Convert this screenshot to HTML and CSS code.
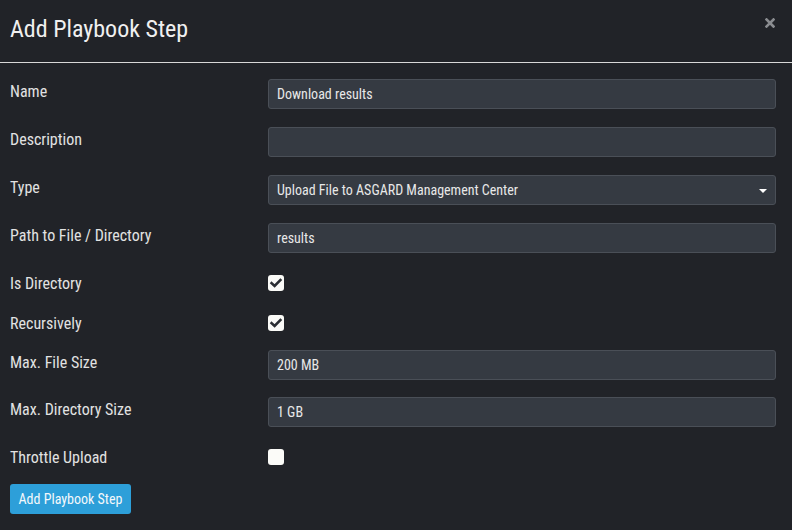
FILE: index.html
```html
<!DOCTYPE html>
<html>
<head>
<meta charset="utf-8">
<link rel="stylesheet" href="styles.css">
</head>
<body>
<div class="modal">
  <div class="modal-header">
    <h1 class="title">Add Playbook Step</h1>
    <span class="close"><svg viewBox="0 0 10 10" width="10" height="10"><path d="M1.5 1.5 L8.5 8.5 M8.5 1.5 L1.5 8.5" stroke="#8a8c90" stroke-width="2.6" stroke-linecap="square"/></svg></span>
  </div>
  <div class="modal-body">
    <div class="row text">
      <label class="lbl">Name</label>
      <div class="input">Download results</div>
    </div>
    <div class="row text">
      <label class="lbl">Description</label>
      <div class="input"></div>
    </div>
    <div class="row text">
      <label class="lbl">Type</label>
      <div class="input select">Upload File to ASGARD Management Center<span class="caret"></span></div>
    </div>
    <div class="row text">
      <label class="lbl">Path to File / Directory</label>
      <div class="input">results</div>
    </div>
    <div class="row check">
      <label class="lbl">Is Directory</label>
      <span class="box checked"><svg viewBox="0 0 16 16" width="16" height="16"><path d="M3.6 8.2 L6.6 11 L12.4 5" fill="none" stroke="#2b2e33" stroke-width="2.6" stroke-linecap="square"/></svg></span>
    </div>
    <div class="row check">
      <label class="lbl">Recursively</label>
      <span class="box checked"><svg viewBox="0 0 16 16" width="16" height="16"><path d="M3.6 8.2 L6.6 11 L12.4 5" fill="none" stroke="#2b2e33" stroke-width="2.6" stroke-linecap="square"/></svg></span>
    </div>
    <div class="row text tight">
      <label class="lbl">Max. File Size</label>
      <div class="input">200 MB</div>
    </div>
    <div class="row text">
      <label class="lbl">Max. Directory Size</label>
      <div class="input">1 GB</div>
    </div>
    <div class="row check">
      <label class="lbl">Throttle Upload</label>
      <span class="box"></span>
    </div>
    <button class="btn">Add Playbook Step</button>
  </div>
</div>
</body>
</html>
```
FILE: styles.css
```css
* { box-sizing: border-box; }
html, body { margin: 0; padding: 0; }
body {
  background: #212328;
  color: #e6e6e6;
  font-family: "Roboto Condensed", "Liberation Sans Narrow", Roboto, sans-serif;
  font-stretch: condensed;
  width: 792px;
  height: 530px;
  overflow: hidden;
}
.modal-header {
  height: 63px;
  border-bottom: 1px solid #d8d8d8;
  display: flex;
  align-items: flex-start;
  justify-content: space-between;
  padding: 0 17px 0 10px;
}
.title {
  margin: 0;
  padding-top: 14px;
  font-size: 24px;
  font-weight: 400;
  line-height: 30px;
  color: #f0f0f0;
}
.close {
  margin-top: 18px;
  display: block;
}
.close svg { display: block; }
.modal-body {
  padding: 16px 16px 0 10px;
  display: flex;
  flex-direction: column;
}
.row {
  display: flex;
  align-items: flex-start;
}
.row.text { height: 30px; margin-bottom: 18px; }
.row.text.tight { margin-bottom: 17px; }
.row.check { height: 21.5px; margin-bottom: 18px; }
.lbl {
  width: 258px;
  flex: none;
  font-size: 16px;
  line-height: 24px;
  padding-top: 1px;
  color: #e2e2e2;
}
.input {
  flex: 1;
  height: 30px;
  background: #353a42;
  border: 1px solid #4a4f57;
  border-radius: 3px;
  padding: 0 8px;
  font-size: 14px;
  line-height: 28px;
  color: #e8e8e8;
  position: relative;
}
.caret {
  position: absolute;
  right: 8px;
  top: 13px;
  width: 0; height: 0;
  border-left: 4px solid transparent;
  border-right: 4px solid transparent;
  border-top: 4px solid #ffffff;
}
.box {
  width: 16px;
  height: 16px;
  margin-top: 4px;
  background: #fbfbf8;
  border-radius: 3px;
  display: block;
}
.box svg { display: block; }
.btn {
  align-self: flex-start;
  margin-top: -0.5px;
  height: 30px;
  width: 121px;
  padding: 0;
  border: none;
  border-radius: 3px;
  background: #2d9fd9;
  color: #f4f8fb;
  font-family: inherit;
  font-stretch: condensed;
  font-size: 14px;
}
```
